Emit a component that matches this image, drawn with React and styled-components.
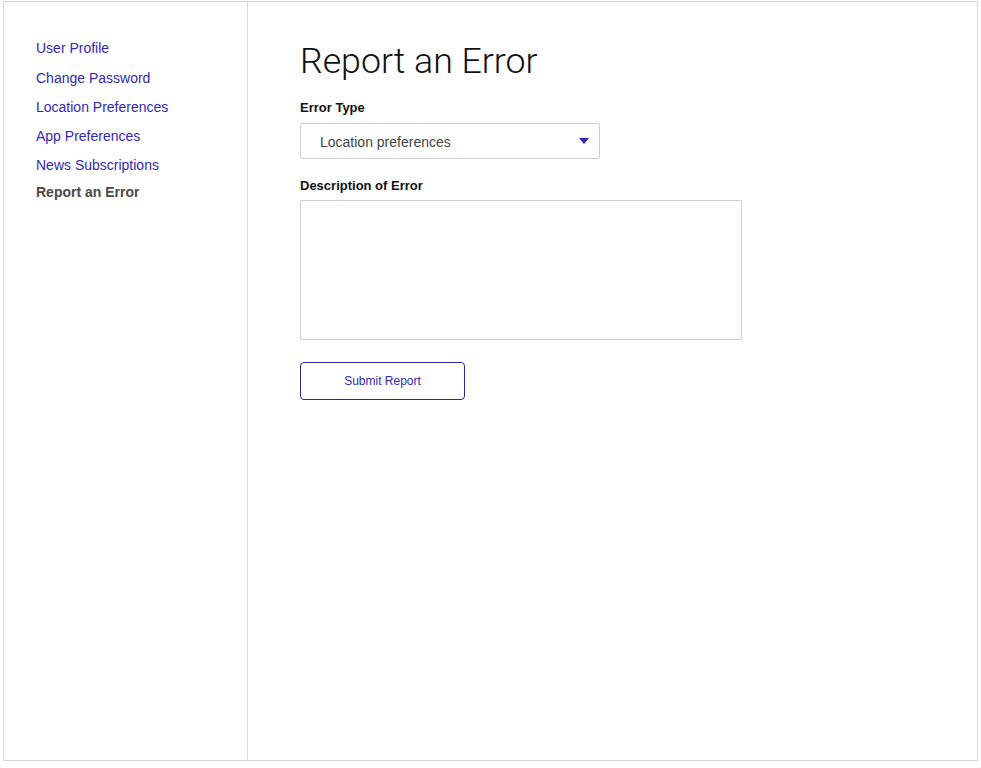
import React from "react";
import styled, { createGlobalStyle } from "styled-components";

const Global = createGlobalStyle`
  html, body { margin: 0; padding: 0; background: #fff; }
  body { font-family: "Liberation Sans", Arial, sans-serif; }
  * { box-sizing: border-box; }
`;

const Frame = styled.div`
  margin: 1px 0 0 3px;
  width: 975px;
  height: 760px;
  border: 1px solid #d9d9d9;
  display: flex;
`;

const Sidebar = styled.nav`
  width: 244px;
  flex: none;
  border-right: 1px solid #d9d9d9;
  padding: 37px 0 0 32px;
  display: flex;
  flex-direction: column;
`;

const NavLink = styled.a`
  font-size: 14px;
  line-height: 18px;
  height: 29px;
  margin-top: ${(p) => (p.$active ? "-2px" : "0")};
  color: ${(p) => (p.$active ? "#4a4a4a" : "#3328b2")};
  font-weight: ${(p) => (p.$active ? 700 : 400)};
  text-decoration: none;
  cursor: pointer;
  &:first-child { height: 30px; }
`;

const Main = styled.main`
  flex: 1;
  padding: 37px 0 0 52px;
  display: flex;
  flex-direction: column;
  align-items: flex-start;
`;

const Title = styled.h1`
  margin: 0 0 17px;
  font-family: Roboto, "Liberation Sans", sans-serif;
  font-size: 35.7px;
  line-height: 44px;
  font-weight: 300;
  color: #111;
`;

const Label = styled.label`
  font-size: 13px;
  font-weight: 700;
  line-height: 16px;
  color: #111;
  margin-bottom: ${(p) => p.$gap || 7}px;
`;

const SelectBox = styled.div`
  width: 300px;
  height: 36px;
  border: 1px solid #d0d0d0;
  border-radius: 2px;
  display: flex;
  align-items: center;
  justify-content: space-between;
  padding: 2px 10px 0 19px;
  margin-bottom: 19px;
  font-size: 14px;
  color: #444;
`;

const Caret = styled.span`
  width: 0;
  height: 0;
  border-left: 5px solid transparent;
  border-right: 5px solid transparent;
  border-top: 6px solid #2b23b0;
  margin-top: -3px;
`;

const TextArea = styled.textarea`
  display: block;
  width: 442px;
  height: 140px;
  border: 1px solid #d0d0d0;
  border-radius: 1px;
  resize: none;
  margin: 0 0 22px;
  font-family: inherit;
  font-size: 14px;
  outline: none;
`;

const Button = styled.button`
  width: 165px;
  height: 38px;
  border: 1px solid #2b23a0;
  border-radius: 4px;
  background: #fff;
  color: #3328b2;
  font-family: "Liberation Sans", Arial, sans-serif;
  font-size: 12px;
  cursor: pointer;
`;

const links = [
  "User Profile",
  "Change Password",
  "Location Preferences",
  "App Preferences",
  "News Subscriptions",
];

export default function App() {
  return (
    <>
      <Global />
      <Frame>
        <Sidebar>
          {links.map((l) => (
            <NavLink key={l}>{l}</NavLink>
          ))}
          <NavLink $active>Report an Error</NavLink>
        </Sidebar>
        <Main>
          <Title>Report an Error</Title>
          <Label>Error Type</Label>
          <SelectBox>
            <span>Location preferences</span>
            <Caret />
          </SelectBox>
          <Label $gap={6}>Description of Error</Label>
          <TextArea />
          <Button>Submit Report</Button>
        </Main>
      </Frame>
    </>
  );
}
